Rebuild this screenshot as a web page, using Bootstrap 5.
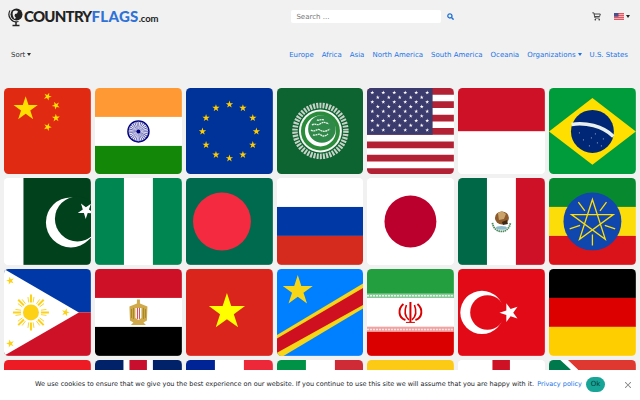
<!DOCTYPE html>
<html lang="en">
<head>
<meta charset="utf-8">
<title>CountryFlags.com</title>
<link href="https://cdn.jsdelivr.net/npm/bootstrap@5.3.0/dist/css/bootstrap.min.css" rel="stylesheet">
<style>
body{background:#f1f1f1;font-family:"DejaVu Sans",sans-serif;font-size:7px;line-height:1.5;color:#212529}
.topbar{height:33px;padding:0 10px 0 8px}
.brand{font-family:"Lato",sans-serif;font-weight:900;font-size:15px;line-height:1;color:#222;letter-spacing:-.75px;text-decoration:none}
.brand-blue{color:#2f72d8;letter-spacing:.3px}
.brand-com{font-size:9.5px;font-weight:700;letter-spacing:-.1px}
.globe{margin-right:0}
.searchbox{margin-left:133px;width:150px;height:13px;min-height:0;padding:0 5px;font-size:7px;border:0;border-radius:2px;background:#fff}
.searchbox::placeholder{color:#777}
.searchgo{margin-left:2px;padding:0 4px;border:0;line-height:1}
.cartlink{margin-left:auto;padding:0;line-height:1}
.langlink{margin-left:12px;padding:0;border:0;font-size:8px;line-height:1}
.subbar{height:42px;padding:2px 8px 0 11px}
.subbar .nav-link{padding:0 4px;font-size:7px;color:#1a73e8}
.sorter{padding:0;border:0;font-size:7px;color:#333}
.dropdown-toggle::after{margin-left:2px;border-top-width:3px;border-right-width:2.5px;border-left-width:2.5px;vertical-align:1px}
.flaggrid{display:grid;grid-template-columns:repeat(7,1fr);gap:4px;padding:0 4px;margin-top:12.5px}
.flagtile{display:block;aspect-ratio:1;border-radius:4.5px;overflow:hidden;background:#fff}
.flagtile svg{display:block;width:100%;height:100%}
.cookiebar{height:30.5px;background:#fff;padding-left:35px;font-size:6.5px}
.cookietext{white-space:nowrap}
.cookielink{color:#1a73e8;text-decoration:none;margin-left:3px}
.okbtn{margin-left:4px;width:19px;height:15px;padding:0;border:0;border-radius:8px;background:#17a598;color:#0c3b36;font-size:7px;line-height:15px}
.closebtn{margin-left:19px;font-size:6px;padding:1px}
</style>
</head>
<body class="overflow-hidden">
<svg class="d-none" aria-hidden="true"><defs>
<polygon id="st" points="0,-1 .225,-.309 .951,-.309 .363,.118 .588,.809 0,.382 -.588,.809 -.363,.118 -.951,-.309 -.225,-.309"/>
<g id="row6" fill="#fff"><use href="#st" transform="translate(5.3 0) scale(2.1)"/><use href="#st" transform="translate(16.3 0) scale(2.1)"/><use href="#st" transform="translate(27.3 0) scale(2.1)"/><use href="#st" transform="translate(38.3 0) scale(2.1)"/><use href="#st" transform="translate(49.3 0) scale(2.1)"/><use href="#st" transform="translate(60.3 0) scale(2.1)"/></g>
<g id="row5" fill="#fff"><use href="#st" transform="translate(10.8 0) scale(2.1)"/><use href="#st" transform="translate(21.8 0) scale(2.1)"/><use href="#st" transform="translate(32.8 0) scale(2.1)"/><use href="#st" transform="translate(43.8 0) scale(2.1)"/><use href="#st" transform="translate(54.8 0) scale(2.1)"/></g>
<g id="ray"><path d="M0-10V-18" stroke-width="2"/><path d="M-2.2-10L-3-15.5M2.2-10L3-15.5" stroke-width=".9"/></g>
</defs></svg>

<div class="topbar d-flex align-items-center">
  <a class="brand d-flex align-items-center" href="#">
    <svg class="globe" width="16" height="20" viewBox="0 0 16 20"><circle cx="8.5" cy="7.5" r="6" fill="#222"/><path d="M5 4.5c2-1.500 4-1 5 0l-1 2-2 .5-.5 2 1.500 2-1.500 1C5 10 4 7 5 4.500z" fill="#f1f1f1"/><path d="M2 3.500a7.500 7.500 0 0 0 8.500 11" fill="none" stroke="#222" stroke-width="1.200"/><path d="M8 15v3M4.500 18.500h7" stroke="#222" stroke-width="1.500"/></svg>
    <span>COUNTRY<span class="brand-blue">FLAGS</span><span class="brand-com">.com</span></span>
  </a>
  <input class="form-control searchbox" type="text" placeholder="Search ...">
  <button class="btn searchgo" type="button" aria-label="Search"><svg class="d-block" width="7" height="7" viewBox="0 0 7 7"><circle cx="2.900" cy="2.900" r="2.100" fill="none" stroke="#1f6fd6" stroke-width="1.300"/><path d="M4.500 4.500L6.600 6.600" stroke="#1f6fd6" stroke-width="1.500"/></svg></button>
  <a class="btn cartlink" href="#" aria-label="Cart"><svg class="d-block" width="9" height="9" viewBox="0 0 9 9"><path d="M.3.800H1.800L3 6H7.600M2 2H8.300L7.600 4.500H2.700" fill="none" stroke="#222" stroke-width=".8"/><circle cx="3.300" cy="7.700" r=".8" fill="#222"/><circle cx="7.200" cy="7.700" r=".8" fill="#222"/></svg></a>
  <button class="btn langlink dropdown-toggle d-flex align-items-center" type="button" aria-label="Language"><svg width="10" height="7" viewBox="0 0 10 7"><rect width="10" height="7" fill="#e25560"/><path d="M0 1.500H10M0 3.500H10M0 5.500H10" stroke="#f3c4c8" stroke-width=".8"/><rect width="4.500" height="3.700" fill="#4b4f8c"/></svg></button>
</div>

<div class="subbar d-flex align-items-center justify-content-between">
  <button class="btn sorter dropdown-toggle" type="button">Sort</button>
  <ul class="nav">
    <li class="nav-item"><a class="nav-link" href="#">Europe</a></li>
    <li class="nav-item"><a class="nav-link" href="#">Africa</a></li>
    <li class="nav-item"><a class="nav-link" href="#">Asia</a></li>
    <li class="nav-item"><a class="nav-link" href="#">North America</a></li>
    <li class="nav-item"><a class="nav-link" href="#">South America</a></li>
    <li class="nav-item"><a class="nav-link" href="#">Oceania</a></li>
    <li class="nav-item"><a class="nav-link dropdown-toggle" href="#">Organizations</a></li>
    <li class="nav-item"><a class="nav-link" href="#">U.S. States</a></li>
  </ul>
</div>

<div class="flaggrid">
<!-- China -->
<a class="flagtile" href="#" aria-label="China"><svg viewBox="0 0 87 87"><rect width="87" height="87" fill="#e02a12"/><g fill="#ffde00"><use href="#st" transform="translate(21.700 21) scale(12.800)"/><use href="#st" transform="translate(43.700 8.500) rotate(23) scale(4.200)"/><use href="#st" transform="translate(52 17.500) rotate(46) scale(4.200)"/><use href="#st" transform="translate(52 30) rotate(70) scale(4.200)"/><use href="#st" transform="translate(43.700 39) rotate(21) scale(4.200)"/></g></svg></a>
<!-- India -->
<a class="flagtile" href="#" aria-label="India"><svg viewBox="0 0 87 87"><rect width="87" height="29" fill="#ff9933"/><rect y="29" width="87" height="29" fill="#fff"/><rect y="58" width="87" height="29" fill="#138808"/><circle cx="43.500" cy="43.500" r="10.500" fill="#fff" stroke="#000080" stroke-width="1.500"/><circle cx="43.500" cy="43.500" r="5.500" fill="none" stroke="#5a5ab0" stroke-width="9" stroke-dasharray=".6 .6"/><circle cx="43.500" cy="43.500" r="2" fill="#000080"/></svg></a>
<!-- European Union -->
<a class="flagtile" href="#" aria-label="European Union"><svg viewBox="0 0 87 87"><rect width="87" height="87" fill="#003399"/><g fill="#ffcc00"><use href="#st" transform="translate(43.500 16.500) scale(3.900)"/><use href="#st" transform="translate(57 20.100) scale(3.900)"/><use href="#st" transform="translate(66.900 30) scale(3.900)"/><use href="#st" transform="translate(70.500 43.500) scale(3.900)"/><use href="#st" transform="translate(66.900 57) scale(3.900)"/><use href="#st" transform="translate(57 66.900) scale(3.900)"/><use href="#st" transform="translate(43.500 70.500) scale(3.900)"/><use href="#st" transform="translate(30 66.900) scale(3.900)"/><use href="#st" transform="translate(20.100 57) scale(3.900)"/><use href="#st" transform="translate(16.500 43.500) scale(3.900)"/><use href="#st" transform="translate(20.100 30) scale(3.900)"/><use href="#st" transform="translate(30 20.100) scale(3.900)"/></g></svg></a>
<!-- Arab League -->
<a class="flagtile" href="#" aria-label="Arab League"><svg viewBox="0 0 87 87"><rect width="87" height="87" fill="#0d6430"/><circle cx="43.500" cy="43" r="25.500" fill="none" stroke="#c9d2c9" stroke-width="5.500" stroke-dasharray="2 1.200"/><circle cx="43.500" cy="43" r="21.500" fill="#f4f6f4"/><circle cx="43.500" cy="43" r="19.500" fill="#2a8b3b"/><circle cx="43.500" cy="43" r="15.500" fill="#fff"/><circle cx="45" cy="41" r="13.800" fill="#2f8a4a"/><path d="M35 37c3-2 5 1 8-1s5-2 9 0M34 42c4 3 6-2 9 0s6 2 10-1M36 47c3 1 6-2 8 0s5 1 7-1M40 32c2 1 4-1 7 0" fill="none" stroke="#e8efe8" stroke-width="1.300" stroke-dasharray="2 .5"/></svg></a>
<!-- United States -->
<a class="flagtile" href="#" aria-label="United States"><svg viewBox="0 0 87 87"><rect width="87" height="87" fill="#fff"/><path d="M0 3.350H87M0 16.730H87M0 30.110H87M0 43.500H87M0 56.880H87M0 70.260H87M0 83.640H87" stroke="#b22234" stroke-width="6.690"/><rect width="65.700" height="46.800" fill="#3c3b6e"/><use href="#row6" y="4.680"/><use href="#row5" y="9.360"/><use href="#row6" y="14.040"/><use href="#row5" y="18.720"/><use href="#row6" y="23.400"/><use href="#row5" y="28.080"/><use href="#row6" y="32.760"/><use href="#row5" y="37.440"/><use href="#row6" y="42.120"/></svg></a>
<!-- Indonesia -->
<a class="flagtile" href="#" aria-label="Indonesia"><svg viewBox="0 0 87 87"><rect width="87" height="43.500" fill="#ce1126"/><rect y="43.500" width="87" height="43.500" fill="#fff"/></svg></a>
<!-- Brazil -->
<a class="flagtile" href="#" aria-label="Brazil"><svg viewBox="0 0 87 87"><rect width="87" height="87" fill="#009b3a"/><polygon points="43.500,10 87,43.500 43.500,77 0,43.500" fill="#fedf00"/><circle cx="43.500" cy="43.500" r="21.500" fill="#002776"/><path d="M22.500 36.500C36 34 54 38 64.500 48.500" fill="none" stroke="#e8f0ee" stroke-width="3.500"/><path d="M34 52h.8M42 50h.8M48 55h.8M54 51h.8M40 58h.8M52 58h.8M46 46h.8M30 45h.8" stroke="#fff" stroke-width=".8"/></svg></a>

<!-- Pakistan -->
<a class="flagtile" href="#" aria-label="Pakistan"><svg viewBox="0 0 87 87"><rect width="87" height="87" fill="#fff"/><rect x="19.500" width="67.500" height="87" fill="#01411c"/><circle cx="67" cy="44.500" r="25" fill="#fff"/><circle cx="73.500" cy="41" r="22.500" fill="#01411c"/><use href="#st" fill="#fff" transform="translate(82 32.500) rotate(-35) scale(8.500)"/></svg></a>
<!-- Nigeria -->
<a class="flagtile" href="#" aria-label="Nigeria"><svg viewBox="0 0 87 87"><rect width="87" height="87" fill="#fff"/><rect width="29" height="87" fill="#008751"/><rect x="58" width="29" height="87" fill="#008751"/></svg></a>
<!-- Bangladesh -->
<a class="flagtile" href="#" aria-label="Bangladesh"><svg viewBox="0 0 87 87"><rect width="87" height="87" fill="#006a4e"/><circle cx="36" cy="43.500" r="29" fill="#f42a41"/></svg></a>
<!-- Russia -->
<a class="flagtile" href="#" aria-label="Russia"><svg viewBox="0 0 87 87"><rect width="87" height="29" fill="#fff"/><rect y="29" width="87" height="29" fill="#0039a6"/><rect y="58" width="87" height="29" fill="#d52b1e"/></svg></a>
<!-- Japan -->
<a class="flagtile" href="#" aria-label="Japan"><svg viewBox="0 0 87 87"><rect width="87" height="87" fill="#fff"/><circle cx="43.500" cy="43.500" r="26" fill="#bc002d"/></svg></a>
<!-- Mexico -->
<a class="flagtile" href="#" aria-label="Mexico"><svg viewBox="0 0 87 87"><rect width="87" height="87" fill="#fff"/><rect width="29" height="87" fill="#006847"/><rect x="58" width="29" height="87" fill="#ce1126"/><path d="M34.500 45c1 6 5 8.500 9 8.500s8-2.500 9-8.500" fill="none" stroke="#4c8a5c" stroke-width="1.800" stroke-dasharray="1.500 .6"/><ellipse cx="44" cy="40" rx="7" ry="6.500" fill="#8c5a2b"/><path d="M40 35l4-2 4 3-2 5-5 1z" fill="#c9a36a"/><path d="M44 44l5-2 1 4-5 1z" fill="#3d2a16"/><ellipse cx="43.500" cy="50" rx="5.500" ry="1.800" fill="#8fbccb"/></svg></a>
<!-- Ethiopia -->
<a class="flagtile" href="#" aria-label="Ethiopia"><svg viewBox="0 0 87 87"><rect width="87" height="29" fill="#078930"/><rect y="29" width="87" height="29" fill="#fcdd09"/><rect y="58" width="87" height="29" fill="#da121a"/><circle cx="43.500" cy="43.500" r="29" fill="#0f47af"/><g fill="none" stroke="#fcdd09" stroke-width="1.300"><polygon points="43.500,21.500 56.400,61.300 22.600,36.700 64.400,36.700 30.600,61.300"/><path d="M51.100 33L57.600 24.100M55.900 47.500L66.300 50.900M43.500 56.500V67.500M31.100 47.500L20.700 50.900M35.900 33L29.400 24.100"/></g></svg></a>

<!-- Philippines -->
<a class="flagtile" href="#" aria-label="Philippines"><svg viewBox="0 0 87 87"><rect width="87" height="43.500" fill="#0038a8"/><rect y="43.500" width="87" height="43.500" fill="#ce1126"/><polygon points="0,0 75,43.500 0,87" fill="#fff"/><g fill="#fcd116" stroke="#fcd116"><circle cx="27" cy="43.500" r="8" stroke="none"/><use href="#ray" transform="translate(27 43.500)"/><use href="#ray" transform="translate(27 43.500) rotate(45)"/><use href="#ray" transform="translate(27 43.500) rotate(90)"/><use href="#ray" transform="translate(27 43.500) rotate(135)"/><use href="#ray" transform="translate(27 43.500) rotate(180)"/><use href="#ray" transform="translate(27 43.500) rotate(225)"/><use href="#ray" transform="translate(27 43.500) rotate(270)"/><use href="#ray" transform="translate(27 43.500) rotate(315)"/></g><g fill="#fcd116"><use href="#st" transform="translate(6.300 11.700) rotate(-15) scale(4.200)"/><use href="#st" transform="translate(61.700 43.500) rotate(15) scale(4.200)"/><use href="#st" transform="translate(6.300 74.700) rotate(-15) scale(4.200)"/></g></svg></a>
<!-- Egypt -->
<a class="flagtile" href="#" aria-label="Egypt"><svg viewBox="0 0 87 87"><rect width="87" height="29" fill="#ce1126"/><rect y="29" width="87" height="29" fill="#fff"/><rect y="58" width="87" height="29" fill="#000"/><path d="M42 30.500h3v4l7.500 3-.5 14-3.500 2 2.500 2.500H36l2.500-2.500-3.500-2-.5-14 7.500-3z" fill="#d0aa4a"/><path d="M40.500 39h6v10l-3 2-3-2z" fill="#fff"/><path d="M42.500 39v11M44.500 39v11" stroke="#ce1126" stroke-width=".8"/><path d="M36.500 40v9M38.500 39v11M48.500 39v11M50.500 40v9" stroke="#8c6d10" stroke-width=".6"/></svg></a>
<!-- Vietnam -->
<a class="flagtile" href="#" aria-label="Vietnam"><svg viewBox="0 0 87 87"><rect width="87" height="87" fill="#da251d"/><use href="#st" fill="#ff0" transform="translate(41 43) scale(19)"/></svg></a>
<!-- DR Congo -->
<a class="flagtile" href="#" aria-label="DR Congo"><svg viewBox="0 0 87 87"><rect width="87" height="87" fill="#007fff"/><polygon points="0,66 87,14 87,39 0,91" fill="#f7d618"/><polygon points="0,69.500 87,18.500 87,35.500 0,84" fill="#ce1021"/><use href="#st" fill="#f7d618" transform="translate(20.800 21.800) scale(15.800)"/></svg></a>
<!-- Iran -->
<a class="flagtile" href="#" aria-label="Iran"><svg viewBox="0 0 87 87"><rect width="87" height="29" fill="#239f40"/><rect y="29" width="87" height="29" fill="#fff"/><rect y="58" width="87" height="29" fill="#da0000"/><rect y="24.500" width="87" height="4.500" fill="#8ccb9c"/><path d="M0 26.800H87" stroke="#e6f4e9" stroke-width="1.500" stroke-dasharray="2 1"/><rect y="58" width="87" height="5" fill="#f0a3a3"/><path d="M0 60.500H87" stroke="#fbe4e4" stroke-width="1.500" stroke-dasharray="2 1"/><g fill="none" stroke="#da0000"><path d="M43.500 33V53" stroke-width="2"/><path d="M39.500 36c-2 5-2 11 2.500 15M47.500 36c2 5 2 11-2.500 15" stroke-width="1.600"/><path d="M36.500 35c-6 5-5 14 2 16M50.500 35c6 5 5 14-2 16" stroke-width="2"/><path d="M39 53.500H48" stroke-width="1"/></g></svg></a>
<!-- Turkey -->
<a class="flagtile" href="#" aria-label="Turkey"><svg viewBox="0 0 87 87"><rect width="87" height="87" fill="#e30a17"/><circle cx="24" cy="43.500" r="21.700" fill="#fff"/><circle cx="29.500" cy="43.500" r="17.300" fill="#e30a17"/><use href="#st" fill="#fff" transform="translate(51.500 43.700) rotate(-90) scale(10)"/></svg></a>
<!-- Germany -->
<a class="flagtile" href="#" aria-label="Germany"><svg viewBox="0 0 87 87"><rect width="87" height="29" fill="#000"/><rect y="29" width="87" height="29" fill="#dd0000"/><rect y="58" width="87" height="29" fill="#ffce00"/></svg></a>

<!-- Row 4, mostly behind the cookie bar -->
<a class="flagtile" href="#" aria-label="Thailand"><svg viewBox="0 0 87 87"><rect width="87" height="87" fill="#ed1c24"/></svg></a>
<a class="flagtile" href="#" aria-label="United Kingdom"><svg viewBox="0 0 87 87"><rect width="87" height="87" fill="#012169"/><rect x="28.500" width="29.500" height="87" fill="#fff"/><rect x="34.500" width="17.500" height="87" fill="#c8102e"/></svg></a>
<a class="flagtile" href="#" aria-label="France"><svg viewBox="0 0 87 87"><rect width="29" height="87" fill="#002395"/><rect x="29" width="29" height="87" fill="#fff"/><rect x="58" width="29" height="87" fill="#ed2939"/></svg></a>
<a class="flagtile" href="#" aria-label="Italy"><svg viewBox="0 0 87 87"><rect width="29" height="87" fill="#009246"/><rect x="29" width="29" height="87" fill="#fff"/><rect x="58" width="29" height="87" fill="#ce2b37"/></svg></a>
<a class="flagtile" href="#" aria-label="Colombia"><svg viewBox="0 0 87 87"><rect width="87" height="87" fill="#fcc914"/></svg></a>
<a class="flagtile" href="#" aria-label="England"><svg viewBox="0 0 87 87"><rect width="87" height="87" fill="#fff"/><rect x="34.500" width="17.500" height="87" fill="#ce1124"/></svg></a>
<a class="flagtile" href="#" aria-label="South Africa"><svg viewBox="0 0 87 87"><rect width="87" height="87" fill="#fff"/><polygon points="0,0 11.300,0 21.600,9.500 21.600,87 0,87" fill="#007a4d"/><polygon points="19,0 87,0 87,87 29,87 29,9.500" fill="#de3831"/></svg></a>
</div>

<div class="cookiebar fixed-bottom d-flex align-items-center">
  <span class="cookietext">We use cookies to ensure that we give you the best experience on our website. If you continue to use this site we will assume that you are happy with it.<a class="cookielink" href="#">Privacy policy</a></span>
  <button class="btn okbtn" type="button">Ok</button>
  <button class="btn-close closebtn" type="button" aria-label="Close"></button>
</div>
<script src="https://cdn.jsdelivr.net/npm/bootstrap@5.3.0/dist/js/bootstrap.bundle.min.js"></script>
</body>
</html>
